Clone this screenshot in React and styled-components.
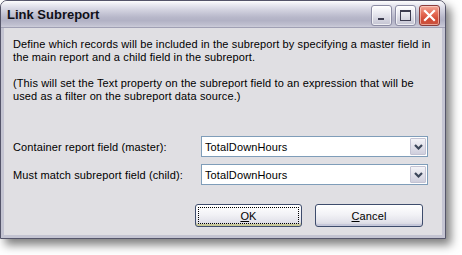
import React from "react";
import styled, { createGlobalStyle } from "styled-components";

const Global = createGlobalStyle`
  html, body { margin: 0; padding: 0; background: #ffffff; }
  body { font-family: "Liberation Sans", Arial, sans-serif; font-size: 11px; color: #000; }
`;

const Page = styled.div`
  width: 462px;
  height: 255px;
  background: #ffffff;
`;

const Window = styled.div`
  width: 446px;
  height: 239px;
  box-sizing: border-box;
  display: flex;
  flex-direction: column;
  border: 1px solid #55556a;
  border-radius: 7px 7px 0 0;
  box-shadow: 5px 6px 10px rgba(0, 0, 0, 0.5);
  overflow: hidden;
  background: #e0dfe3;
`;

const TitleBar = styled.div`
  height: 27px;
  flex: none;
  box-sizing: border-box;
  display: flex;
  align-items: center;
  padding: 0 5px 0 6px;
  background: linear-gradient(
    to bottom,
    #fefefe 0%,
    #ececf3 12%,
    #d2d2df 35%,
    #b8b8ca 62%,
    #b2b2c5 75%,
    #c0c0d0 92%,
    #cdcdda 100%
  );
  border-bottom: 1px solid #a0a0b4;
`;

const Title = styled.div`
  flex: 1;
  font-family: "Liberation Sans", Arial, sans-serif;
  font-weight: bold;
  font-size: 13px;
  color: #101018;
  padding-top: 1px;
`;

const Caps = styled.div`
  display: flex;
  gap: 3px;
  padding-top: 2px;
`;

const CapButton = styled.div`
  width: 21px;
  height: 21px;
  box-sizing: border-box;
  border-radius: 3px;
  border: 1px solid ${(p) => (p.$close ? "#8a3c3c" : "#8c8ca4")};
  background: ${(p) =>
    p.$close
      ? "linear-gradient(to bottom, #f4a99a 0%, #e56b55 40%, #d24a35 70%, #c8533f 100%)"
      : "linear-gradient(to bottom, #ffffff 0%, #e8e8f0 40%, #d2d2de 75%, #c4c4d2 100%)"};
  box-shadow: inset 0 0 0 1px ${(p) => (p.$close ? "rgba(255,220,210,0.6)" : "rgba(255,255,255,0.7)")};
  display: flex;
  align-items: center;
  justify-content: center;
`;

const Body = styled.div`
  flex: 1;
  display: flex;
  flex-direction: column;
  border-left: 3px solid #c4c4d2;
  border-right: 3px solid #c4c4d2;
  border-bottom: 3px solid #c4c4d2;
  padding: 10px 15px 0 9px;
  background: #e0dfe3;
  letter-spacing: 0.12px;
`;

const Para = styled.p`
  margin: 0 0 13px 0;
  line-height: 13px;
  font-size: 11px;
  color: #000;
  white-space: nowrap;
`;

const Form = styled.div`
  display: grid;
  grid-template-columns: 188px 227px;
  row-gap: 7px;
  align-items: center;
  margin-top: 20px;
`;

const Label = styled.label`
  font-size: 11px;
  color: #000;
`;

const Combo = styled.div`
  height: 21px;
  box-sizing: border-box;
  border: 1px solid #7f9db9;
  background: #ffffff;
  display: flex;
  align-items: stretch;
  padding: 1px;
`;

const ComboText = styled.div`
  flex: 1;
  display: flex;
  align-items: center;
  padding-left: 2px;
  font-size: 11px;
`;

const DropButton = styled.div`
  width: 16px;
  box-sizing: border-box;
  border: 1px solid #c3c3d3;
  border-radius: 1px;
  background: linear-gradient(to bottom, #f3f3f7 0%, #dedee8 60%, #cfcfdd 100%);
  display: flex;
  align-items: center;
  justify-content: center;
`;

const Buttons = styled.div`
  display: flex;
  justify-content: flex-end;
  gap: 13px;
  margin-top: 19px;
  padding-right: 4px;
`;

const PushButton = styled.button`
  width: ${(p) => p.$w}px;
  height: 23px;
  box-sizing: border-box;
  border: 1px solid #3e4c6c;
  border-radius: 3px;
  background: linear-gradient(to bottom, #ffffff 0%, #f2f2f6 45%, #e2e2ea 80%, #d0d0dc 100%);
  box-shadow: ${(p) =>
    p.$default
      ? "inset 0 -2px 0 #c8c89a, inset 0 1px 0 #ffffff"
      : "inset 0 -2px 0 #c6c8da, inset 0 1px 0 #ffffff"};
  font-family: "Liberation Sans", Arial, sans-serif;
  font-size: 11px;
  letter-spacing: 0.12px;
  color: #000;
  padding: 2px;
  display: flex;
  align-items: stretch;
  justify-content: stretch;
`;

const Focus = styled.span`
  flex: 1;
  display: flex;
  align-items: center;
  justify-content: center;
  border: 1px dotted ${(p) => (p.$on ? "#000" : "transparent")};
`;

const U = styled.span`
  text-decoration: underline;
`;

const Chevron = () => (
  <svg width="9" height="6" viewBox="0 0 9 6">
    <path d="M1 1 L4.5 4.5 L8 1" fill="none" stroke="#3c475a" strokeWidth="2.2" />
  </svg>
);

export default function App() {
  return (
    <Page>
      <Global />
      <Window>
        <TitleBar>
          <Title>Link Subreport</Title>
          <Caps>
            <CapButton>
              <svg width="11" height="11" viewBox="0 0 11 11">
                <rect x="2" y="8" width="6" height="2" fill="#3c3c50" />
              </svg>
            </CapButton>
            <CapButton>
              <svg width="13" height="13" viewBox="0 0 13 13">
                <rect x="1.5" y="1.5" width="10" height="10" fill="none" stroke="#3c3c50" strokeWidth="1" />
                <rect x="1" y="1" width="11" height="2" fill="#3c3c50" />
              </svg>
            </CapButton>
            <CapButton $close>
              <svg width="13" height="13" viewBox="0 0 13 13">
                <path d="M2 2 L11 11 M11 2 L2 11" stroke="#ffffff" strokeWidth="2.2" strokeLinecap="square" />
              </svg>
            </CapButton>
          </Caps>
        </TitleBar>
        <Body>
          <Para>
            Define which records will be included in the subreport by specifying a master field in
            <br />
            the main report and a child field in the subreport.
          </Para>
          <Para>
            (This will set the Text property on the subreport field to an expression that will be
            <br />
            used as a filter on the subreport data source.)
          </Para>
          <Form>
            <Label>Container report field (master):</Label>
            <Combo>
              <ComboText>TotalDownHours</ComboText>
              <DropButton>
                <Chevron />
              </DropButton>
            </Combo>
            <Label>Must match subreport field (child):</Label>
            <Combo>
              <ComboText>TotalDownHours</ComboText>
              <DropButton>
                <Chevron />
              </DropButton>
            </Combo>
          </Form>
          <Buttons>
            <PushButton $w={107} $default>
              <Focus $on>
                <U>O</U>K
              </Focus>
            </PushButton>
            <PushButton $w={108}>
              <Focus>
                <U>C</U>ancel
              </Focus>
            </PushButton>
          </Buttons>
        </Body>
      </Window>
    </Page>
  );
}
